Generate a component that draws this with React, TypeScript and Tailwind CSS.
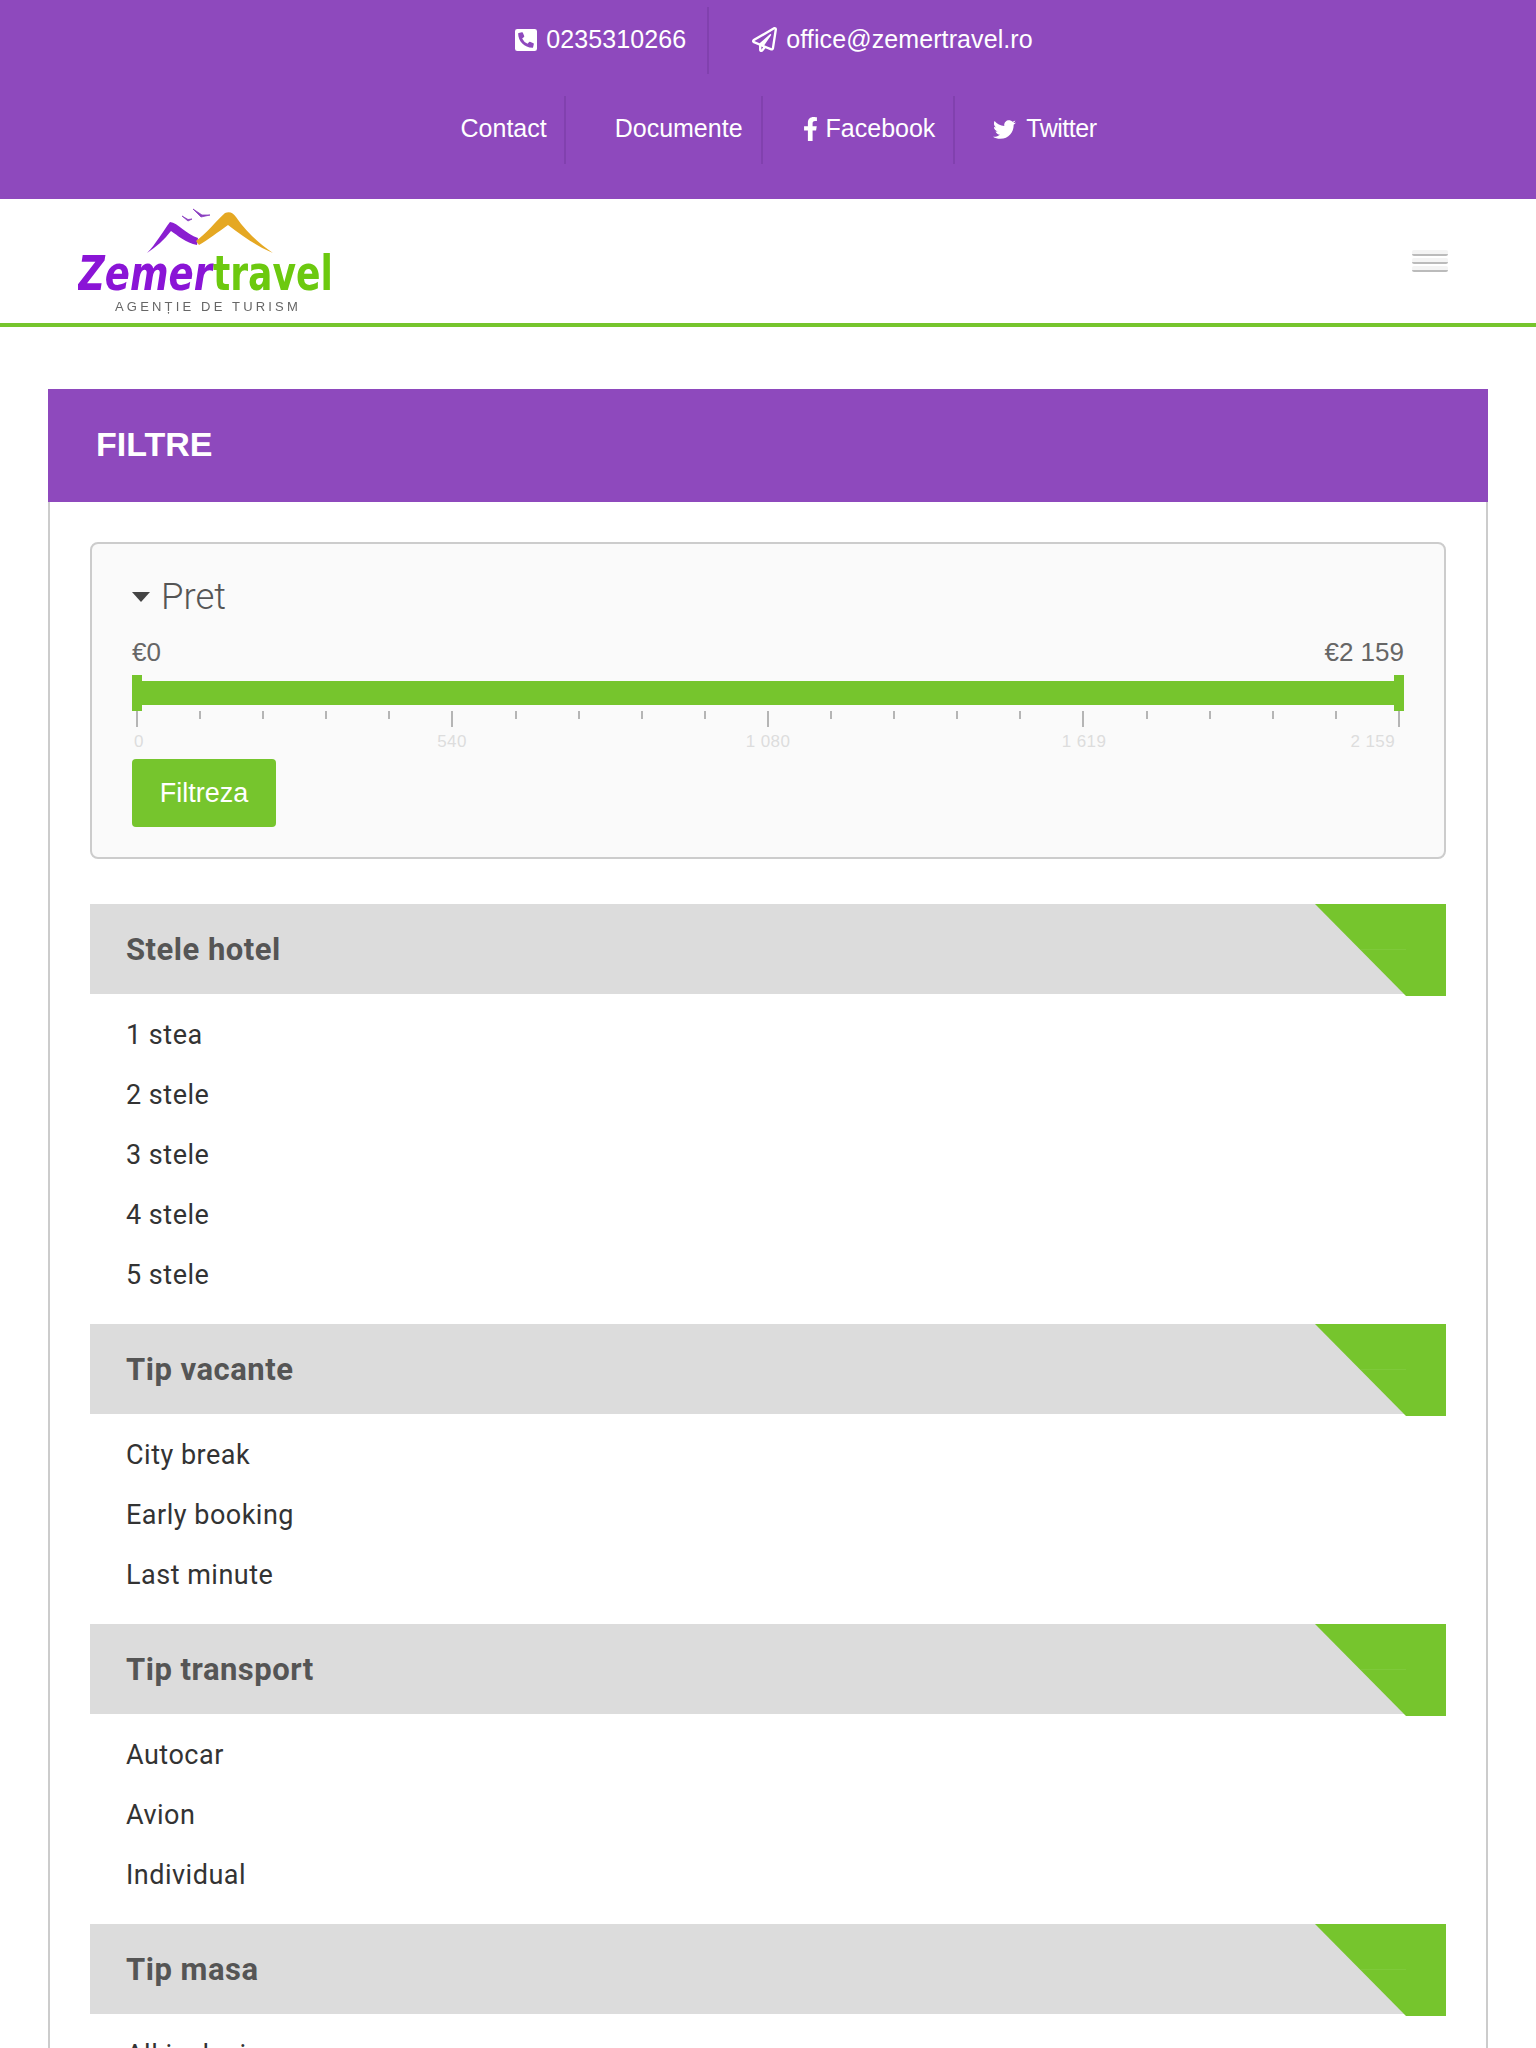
import React from "react";
import { FaPhoneSquareAlt, FaRegPaperPlane, FaFacebookF, FaTwitter } from "react-icons/fa";

const sans = "font-['Liberation_Sans',Arial,sans-serif]";
const roboto = "font-['Roboto',sans-serif]";

function Logo() {
  return (
    <svg width="270" height="110" viewBox="0 0 270 110" className="block blur-[0.4px]">
      <path d="M69 47 C78 38 85 25 92 16 C100 17 108 28 120 32 L119 39 C108 37 99 29 93 25 C86 34 78 41 69 47Z" fill="#8a1fd0" />
      <path d="M118 35 C128 28 138 15 147 7 C152 5 155 7 158 11 C168 26 182 38 195 47 C178 40 163 29 150 19 C140 26 130 34 121 39Z" fill="#e5a823" />
      <path d="M104 10 L110 15 L114 13 L110 13.5 Z M115 3 L123 11 L132 9 L124 9 Z" fill="#8a3fc0" stroke="#8a3fc0" strokeWidth="0.8" />
      <text x="0" y="84" fontFamily="'DejaVu Sans',sans-serif" fontWeight="700" fontStyle="italic" fontSize="48" fill="#8a14d6" textLength="134" lengthAdjust="spacingAndGlyphs">Zemer</text>
      <text x="135" y="84" fontFamily="'DejaVu Sans',sans-serif" fontWeight="700" fontSize="48" fill="#6cc90f" textLength="120" lengthAdjust="spacingAndGlyphs">travel</text>
      <text x="37" y="105" fontFamily="'Liberation Sans',sans-serif" fontSize="13" fill="#666" letterSpacing="3.2" textLength="186">AGENȚIE DE TURISM</text>
    </svg>
  );
}

function Section({ title, items }: { title: string; items: string[] }) {
  return (
    <section className="mb-5">
      <div className="relative h-[90px] bg-[#dcdcdc] flex items-center pl-9">
        <h3 className={`${roboto} text-[31px] font-bold text-[#555] leading-none tracking-[0.5px]`}>{title}</h3>
        <svg className="absolute right-0 top-0" width="131" height="92" viewBox="0 0 131 92">
          <polygon points="0,0 131,0 131,92 91,92" fill="#76c52d" />
          <line x1="46" y1="45.5" x2="91" y2="45.5" stroke="#7ec93a" />
        </svg>
      </div>
      <ul className="pt-[10px]">
        {items.map((t) => (
          <li key={t} className={`${roboto} h-[60px] flex items-center pl-9 pt-[2px] text-[27px] text-[#333] tracking-[0.5px]`}>{t}</li>
        ))}
      </ul>
    </section>
  );
}

export default function App() {
  const ticks = Array.from({ length: 21 }, (_, i) => i);
  return (
    <div className={`${sans} bg-white h-[2048px] overflow-hidden`}>
      <div className="bg-[#8e49bd] h-[199px] text-white text-[25px]">
        <div className="flex justify-center h-[96px] pt-[7px] pl-[12px]">
          <div className="flex items-center gap-[9px] pr-[21px] pl-[21px] pb-[2px] border-r-2 border-[#8141ae] h-[67px]">
            <FaPhoneSquareAlt className="w-[22px] h-[30px]" />
            <span className="tracking-[0.1px]">0235310266</span>
          </div>
          <div className="flex items-center gap-[9px] pl-[43px] pr-[21px] pb-[2px] h-[67px]">
            <FaRegPaperPlane className="w-[25px] h-[25px]" />
            <span className="tracking-[0.1px]">office@zemertravel.ro</span>
          </div>
        </div>
        <div className="flex justify-center pl-[21px]">
          <div className="flex items-center h-[68px] pb-[2px] pr-[17px] border-r-2 border-[#8141ae]">Contact</div>
          <div className="flex items-center h-[68px] pb-[2px] pl-[49px] pr-[18px] border-r-2 border-[#8141ae]">Documente</div>
          <div className="flex items-center gap-[8px] h-[68px] pb-[2px] pl-[40px] pr-[18px] border-r-2 border-[#8141ae]">
            <FaFacebookF className="w-[15px] h-[28px]" />
            <span>Facebook</span>
          </div>
          <div className="flex items-center gap-[10px] h-[68px] pb-[2px] pl-[38px]">
            <FaTwitter className="w-[23px] h-[23px]" />
            <span className="tracking-[-0.5px]">Twitter</span>
          </div>
        </div>
      </div>

      <header className="h-[128px] border-b-4 border-[#76c52d] flex items-center justify-between pl-[78px] pr-[88px]">
        <Logo />
        <div className="flex flex-col gap-[2px] w-[36px] mb-[1px]">
          <span className="h-[6px] bg-[#f4f4f4] border-b-2 border-[#bbb] rounded-[2px]" />
          <span className="h-[6px] bg-[#f4f4f4] border-b-2 border-[#bbb] rounded-[2px]" />
          <span className="h-[6px] bg-[#f4f4f4] border-b-2 border-[#bbb] rounded-[2px]" />
        </div>
      </header>

      <main className="mx-[48px] mt-[62px] border-x-2 border-[#ccc] h-[1700px]">
        <div className="-mx-[2px] h-[113px] bg-[#8e49bd] flex items-center pl-[48px] pb-[2px]">
          <h2 className="text-white text-[34px] font-bold">FILTRE</h2>
        </div>

        <div className="px-[40px] pt-[40px]">
          <div className="h-[317px] bg-[#fafafa] border-2 border-[#ccc] rounded-[8px] px-[40px] pt-[28px]">
            <div className="flex items-center gap-[11px] h-[50px]">
              <svg width="18" height="10" viewBox="0 0 18 10"><polygon points="0,0 18,0 9,10" fill="#444" /></svg>
              <span className={`${roboto} font-light text-[36.5px] text-[#555] leading-none`}>Pret</span>
            </div>
            <div className="flex justify-between text-[26px] text-[#666] leading-[30px] mt-[15px]">
              <span>€0</span>
              <span>€2 159</span>
            </div>
            <div className="relative h-[36px] mt-[8px] flex items-center">
              <div className="w-full h-[24px] bg-[#76c52d]" />
              <span className="absolute left-0 top-0 w-[10px] h-[36px] bg-[#76c52d]" />
              <span className="absolute right-0 top-0 w-[10px] h-[36px] bg-[#76c52d]" />
            </div>
            <div className="flex justify-between px-[4px] h-[16px]">
              {ticks.map((i) => (
                <span key={i} className={`w-[2px] ${i % 5 === 0 ? "h-[16px]" : "h-[8px]"} bg-[#b5b5b5]`} />
              ))}
            </div>
            <div className="flex text-[17px] text-[#ddd] leading-[20px] mt-[5px] tracking-[0.4px]">
              <span className="w-[162px] pl-[2px]">0</span>
              <span className="w-[316px] text-center">540</span>
              <span className="w-[316px] text-center">1 080</span>
              <span className="w-[316px] text-center">1 619</span>
              <span className="w-[162px] text-right pr-[9px]">2 159</span>
            </div>
            <button className="mt-[7px] w-[144px] h-[68px] bg-[#76c52d] rounded-[4px] text-white text-[27px]">Filtreza</button>
          </div>

          <div className="mt-[45px]">
            <Section title="Stele hotel" items={["1 stea", "2 stele", "3 stele", "4 stele", "5 stele"]} />
            <Section title="Tip vacante" items={["City break", "Early booking", "Last minute"]} />
            <Section title="Tip transport" items={["Autocar", "Avion", "Individual"]} />
            <Section title="Tip masa" items={["All inclusive"]} />
          </div>
        </div>
      </main>
    </div>
  );
}
